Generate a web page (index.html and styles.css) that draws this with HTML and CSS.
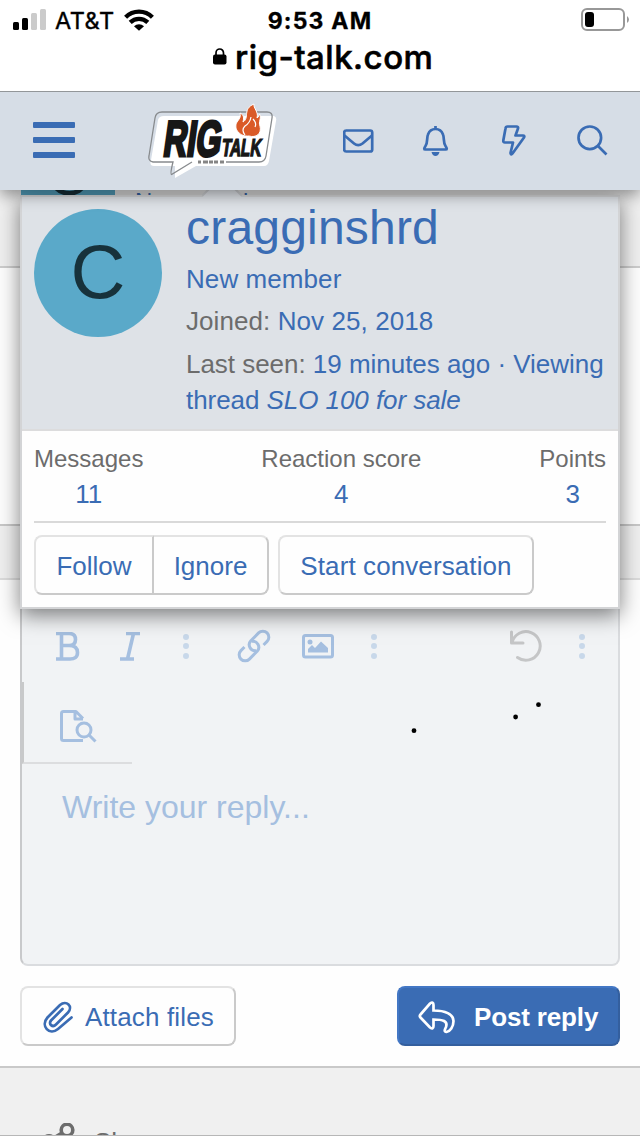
FILE: index.html
```html
<!DOCTYPE html>
<html lang="en">
<head>
<meta charset="utf-8">
<title>rig-talk.com</title>
<link rel="stylesheet" href="styles.css">
</head>
<body>
<div class="screen">
  <header class="chrome">
    <div class="status">
      <div class="carrier">
        <svg width="33" height="21" viewBox="0 0 33 21"><rect y="13" width="6" height="8" rx="1.5"/><rect x="9" y="9" width="6" height="12" rx="1.5"/><g fill="#cbcbcb"><rect x="18" y="4" width="6" height="17" rx="1.5"/><rect x="27" y="0" width="6" height="21" rx="1.5"/></g></svg>
        <span class="network">AT&amp;T</span>
        <svg class="wifi" width="30" height="22" viewBox="0 0 30 22"><g fill="none" stroke="#000" stroke-width="4.300"><path d="M1.600 8.200a19 19 0 0 1 26.800 0"/><path d="M6.200 13.400a12.500 12.500 0 0 1 17.600 0"/></g><path d="M15 21.800l-5-4.500a7.200 7.200 0 0 1 10 0z"/></svg>
      </div>
      <span class="clock">9:53 AM</span>
      <svg class="battery" width="49" height="24" viewBox="0 0 49 24"><rect x="2" y="1" width="42" height="21" rx="5" fill="none" stroke="#989898" stroke-width="2"/><rect x="5" y="4" width="9" height="15" rx="3"/><path d="M47 8q2 1.500 2 3.500t-2 3.500z" fill="#989898"/></svg>
    </div>
    <div class="address">
      <svg width="14" height="17" viewBox="0 0 14 17"><rect y="6.500" width="13.500" height="10" rx="2"/><path d="M3 8V5a3.750 4 0 0 1 7.500 0v3" fill="none" stroke="#000" stroke-width="1.700"/></svg>
      <span>rig-talk.com</span>
    </div>
  </header>

  <nav class="nav">
    <div class="burger"><i></i><i></i><i></i></div>
    <svg class="logo" width="132" height="80" viewBox="148 101 132 80">
      <path d="M164 116H274Q277 117 276 121L269 161Q268 166 264 166H196L175 178V166H154Q149 166 151 160L158 120Q159 116 164 116Z" fill="#fff"/>
      <path d="M162 112H267Q273 112 272 118L266 156Q265 162 259 162H226M192 162L171.500 174.500Q170 174 173 162H153Q148 161 149 156L155 118Q156 112 162 112" fill="none" stroke="#888b8e" stroke-width="1.300"/>
      <path d="M198 162h3m2 0h5m1 0h4m1 0h4m2 0h4" stroke="#858585" stroke-width="3"/>
      <text class="logo-rig" transform="translate(162 156) skewX(-8) scale(.65 1)">RIG</text>
      <text class="logo-talk" transform="translate(221 156) skewX(-8) scale(.62 1)">TALK</text>
      <path d="M254 104C253 108 259 112 257 118Q259 117 259.500 114C262 118 258 122 260 126C262 134 256 138 249 136C240 137 233 129 237 122C239 119 241 118 240 113C244 115 244 118 243 122C250 118 242 109 254 104Z" fill="#da5a27" stroke="#fff" stroke-width="1"/>
      <path d="M251 117Q250 123 245 126Q241 130 245 135M253 119Q257 123 255 127" fill="none" stroke="#fff" stroke-width="1.200"/>
    </svg>
    <div class="nav-icons">
      <svg width="31" height="24" viewBox="0 0 31 24"><rect x="1.200" y="1.500" width="28" height="21" rx="2"/><path d="M1.500 6.500L11 14.500q4.200 3.400 8.500 0L29 6.500"/></svg>
      <svg class="bell" width="27" height="31" viewBox="0 0 27 31"><path d="M3.500 21C6 17.500 4.500 13 6 9.500Q8 4 13.500 4T21 9.500C22.500 13 21 17.500 23.500 21Q26 24.500 23.500 24.500H3.500Q1 24.500 3.500 21ZM13.500 4V1"/><path d="M9.500 27h8q-1 4-4 4t-4-4Z" class="solid"/></svg>
      <svg width="24" height="31" viewBox="0 0 24 31"><path d="M5.500 1.500H14.500Q16.500 1.500 16 3.500L13.500 10.500H21Q23 10.500 22 12.500L10.500 28.500Q9 30.500 8.500 28L11 17.500H3Q1 17.500 1.300 15.500L3.500 3.500Q3.700 1.500 5.500 1.500Z"/></svg>
      <svg width="31" height="31" viewBox="0 0 31 31"><circle cx="12.800" cy="12.800" r="11.300"/><path d="M20.500 20.500L29.500 29.500"/></svg>
    </div>
  </nav>

  <main class="page">
    <section class="peek">
      <div class="peek-avatar">C</div>
      <div class="peek-title">New member</div>
    </section>
    <section class="post"></section>
    <section class="band"></section>
    <section class="reply">
      <div class="editor">
        <div class="toolbar">
          <svg class="t-b" width="24" height="29" viewBox="0 0 24 29"><path d="M0 1.500H13Q19.500 1.500 19.500 7.500T13 13.500H6M13 13.500Q21.500 13.500 21.500 20.500T13 27H0M5.500 1.500V27"/></svg>
          <svg class="t-i" width="21" height="29" viewBox="0 0 21 29"><path d="M6 1.500H20M0 27H14M13.500 1.500L7.500 27"/></svg>
          <span class="dots"><i></i><i></i><i></i></span>
          <svg class="t-link" width="34" height="34" viewBox="0 0 34 34"><g transform="rotate(-45 17 17)"><path d="M9.500 11H4.500A6 6 0 0 0 4.500 23H15.500A6 6 0 0 0 18.500 12"/><path d="M24.500 23H29.500A6 6 0 0 0 29.500 11H18.500A6 6 0 0 0 15.500 22" /></g></svg>
          <svg class="t-img" width="32" height="25" viewBox="0 0 32 25"><rect x="1.500" y="1.500" width="29" height="21.500" rx="2"/><circle cx="8" cy="8" r="2.500" class="fill"/><path d="M6 18.500V15l4-4 3 3 6-6.500 7 6.500v4.500Z" class="fill"/></svg>
          <span class="dots dots2"><i></i><i></i><i></i></span>
          <svg class="t-undo" width="32" height="33" viewBox="0 0 32 33"><path d="M1.500 2V13H13M2 12.500A14.300 14.300 0 1 1 7.500 27.500"/></svg>
          <span class="dots dots3"><i></i><i></i><i></i></span>
        </div>
        <div class="preview">
          <svg width="37" height="33" viewBox="0 0 37 33"><path d="M23 30.500H3.500Q1.500 30.500 1.500 28.500V3.500Q1.500 1.500 3.500 1.500H16L23 8.500M15 1.500V9H23"/><circle cx="24" cy="20" r="7"/><path d="M29 25L35.500 31.500"/></svg>
        </div>
        <div class="placeholder">Write your reply...</div>
        <svg class="specks" width="134" height="32" viewBox="0 0 134 32"><circle cx="4" cy="28.700" r="2.400"/><circle cx="105.600" cy="15" r="2.400"/><circle cx="128.500" cy="2.700" r="2.400"/></svg>
      </div>
      <div class="actions">
        <div class="btn attach"><svg width="30" height="33" viewBox="0 0 30 33"><path d="M19.500 8L8 19.500C5 23 9.500 27 13 23.500L25 11.500C30.500 5.500 23.500-1.500 17 4L4.500 16.500C-3 25 6.500 35 15 28L28.500 16.500"/></svg><span>Attach files</span></div>
        <div class="btn primary"><svg width="37" height="33" viewBox="0 0 37 33"><path d="M12 2.500Q15.500 0 15.500 4V9.500C27 9.500 35.500 13 35.500 20C35.500 26 32 30.500 28.500 31C25.500 31 27 28 28 26C30 20 25 18.500 15.500 18.500V25Q15.500 29 12 26.500L2.500 16.500Q1 15 2.500 13.500Z"/></svg><span>Post reply</span></div>
      </div>
    </section>
    <footer class="share">
      <svg width="32" height="34" viewBox="0 0 32 34"><circle cx="24" cy="7" r="5.800"/><circle cx="6" cy="18.500" r="5.800"/><circle cx="24" cy="29" r="5.800"/><path d="M10 15.500L19 10M12 21L19 25"/></svg>
      <span>Share:</span>
    </footer>
  </main>

  <aside class="card">
    <div class="card-head">
      <div class="avatar">C</div>
      <div class="info">
        <div class="name">cragginshrd</div>
        <div class="row">New member</div>
        <div class="row"><em>Joined:</em> Nov 25, 2018</div>
        <div class="row"><span class="seen"><em>Last seen:</em> 19 minutes ago · Viewing</span><br><span class="thread">thread <i>SLO 100 for sale</i></span></div>
      </div>
    </div>
    <div class="card-body">
      <div class="stats">
        <div><label>Messages</label><b>11</b></div>
        <div><label>Reaction score</label><b>4</b></div>
        <div><label>Points</label><b>3</b></div>
      </div>
      <div class="buttons">
        <div class="group"><div class="btn follow">Follow</div><div class="btn ignore">Ignore</div></div>
        <div class="btn start">Start conversation</div>
      </div>
    </div>
    <svg class="arrow" width="40" height="22" viewBox="0 0 40 22"><path d="M0 22L20 2L40 22Z" fill="#dee2e7"/><path d="M0 21L20 1L40 21" fill="none" stroke="#c9cbce" stroke-width="2"/></svg>
  </aside>
</div>
</body>
</html>
```
FILE: styles.css
```css
* { box-sizing: border-box; }
body { margin: 0; font-family: "Liberation Sans", Arial, sans-serif; color: #3a6cb4; }
svg { display: block; flex: none; }
.screen { position: relative; width: 640px; height: 1136px; overflow: hidden; display: flex; flex-direction: column; background: #fefefe; }

.chrome { position: relative; z-index: 6; height: 92px; flex: none; border-bottom: 1px solid #939699; background: #fff; color: #000; font-family: Inter, sans-serif; }
.status { display: grid; grid-template-columns: 1fr auto 1fr; height: 39px; padding: 0 11px 0 13px; }
.carrier { display: flex; padding-top: 9px; }
.network { font-size: 23.500px; line-height: 24px; font-weight: 400; margin-left: 9px; letter-spacing: .5px; -webkit-text-stroke: .4px #000; }
.wifi { margin-left: 9px; }
.clock { font-size: 23px; font-weight: 700; line-height: 24px; padding-top: 9px; margin-left: -2px; letter-spacing: 1.200px; -webkit-text-stroke: .3px #000; }
.battery { justify-self: end; margin-top: 8px; }
.address { display: flex; padding-left: 213px; gap: 8px; font-size: 33px; font-weight: 500; line-height: 38px; letter-spacing: .5px; -webkit-text-stroke: .6px #000; }
.address svg { margin-top: 9px; }
.address span { margin-top: -1px; }

.nav { position: relative; z-index: 5; height: 98px; flex: none; display: flex; background: #d6dde6; box-shadow: 0 5px 14px rgba(0,0,0,.4); }
.burger { width: 42px; margin: 30px 0 0 33px; display: flex; flex-direction: column; gap: 9px; }
.burger i { height: 6px; border-radius: 1px; background: #3a6cb4; }
.logo { margin: 9px 0 0 73px; }
.logo text { font-weight: 700; fill: #171717; stroke: #171717; }
.logo-rig { font-size: 50px; stroke-width: 3px; }
.logo-talk { font-size: 24.500px; stroke-width: 1.500px; }
.nav-icons { flex: 1; height: 97px; padding: 0 32px 0 63px; display: flex; justify-content: space-between; align-items: center; }
.nav-icons svg { fill: none; stroke: #3a6cb4; stroke-width: 2.700; stroke-linejoin: round; }
.nav-icons .bell { margin: 0 3px 0 -3px; }
.nav-icons .solid { fill: #3a6cb4; stroke: none; }

.page { flex: 1; display: flex; flex-direction: column; min-height: 0; }
.peek { height: 78px; flex: none; border-bottom: 2px solid #cdcdcd; background: #f0f0f0; display: flex; padding-left: 21px; overflow: hidden; }
.peek-avatar { width: 94px; height: 6px; background: #58a9c8; color: #17323b; display: flex; align-items: flex-end; justify-content: center; font-size: 60px; line-height: 42px; overflow: hidden; }
.peek-title { margin-left: 20px; font-size: 24px; line-height: 28px; margin-top: -2px; }
.post { height: 256px; flex: none; }
.band { height: 56px; flex: none; background: #f0f0f0; border-top: 2px solid #c8c8c8; border-bottom: 2px solid #dcdcdc; }
.reply { height: 488px; flex: none; padding: 0 20px; border-bottom: 2px solid #c9c9c9; }
.editor { position: relative; height: 386px; border: 2px solid #dadcdf; border-left-color: #c8c9cb; border-radius: 8px; background: #f1f3f5; }
.toolbar { height: 100px; padding: 28px 0 0 34px; display: flex; align-items: center; }
.toolbar svg, .preview svg { fill: none; stroke: #a5bfe0; stroke-width: 3; stroke-linejoin: round; }
.toolbar .t-b, .toolbar .t-i { stroke-width: 3.600; }
.toolbar .fill { fill: #a5bfe0; stroke: none; }
.t-i { margin-left: 40px; }
.dots { width: 6px; display: flex; flex-direction: column; gap: 3.500px; margin-left: 42px; }
.dots i { width: 6px; height: 6px; border-radius: 50%; background: #c8d8ea; }
.t-link { margin-left: 48px; }
.t-img { margin-left: 31px; }
.dots2 { margin-left: 37px; }
.toolbar .t-undo { margin-left: 133px; stroke: #c5c6c7; stroke-linecap: round; }
.dots3 { margin-left: 37px; }
.preview { width: 110px; height: 82px; border-left: 2px solid #c8c9ca; border-bottom: 2px solid #dcdddf; padding: 28px 0 0 36px; }
.placeholder { font-size: 32px; line-height: 36px; padding: 25px 0 0 40px; color: #a5bfe0; white-space: nowrap; }
.specks { position: absolute; left: 388px; top: 120px; }
.actions { display: flex; justify-content: space-between; padding-top: 20px; }
.btn { height: 60px; padding-top: 2px; display: flex; align-items: center; border: 2px solid #e3e3e3; border-right-color: #cacaca; border-bottom-color: #cacaca; border-radius: 8px; background: #fefefe; font-size: 26px; white-space: nowrap; }
.attach { width: 216px; padding-left: 21px; gap: 12px; letter-spacing: .15px; }
.attach svg { fill: none; stroke: #3a6cb4; stroke-width: 2.700; stroke-linecap: round; }
.primary { width: 223px; padding-left: 19px; gap: 19px; color: #fff; font-weight: 700; letter-spacing: -.15px; background: #3a6cb4; border-color: #4377c5 #345f9e #345f9e #4377c5; }
.primary svg { fill: none; stroke: #fff; stroke-width: 2.700; }
.share { flex: 1; background: #f0f0f0; border-bottom: 1px solid #b7b7b7; padding: 55px 0 0 43px; display: flex; gap: 19px; color: #6c6c6c; font-size: 26px; line-height: 36px; overflow: hidden; }
.share svg { fill: none; stroke: #6c6c6c; stroke-width: 3.600; }
.share span { margin-top: 1px; }

.card { position: absolute; z-index: 3; left: 20px; top: 195px; width: 600px; height: 414px; border: 2px solid #d3d4d6; background: #fefefe; box-shadow: 0 6px 20px rgba(0,0,0,.5); }
.card-head { height: 234px; padding: 12px 0 0 12px; display: flex; gap: 24px; background: #dee2e7; border-bottom: 2px solid #dcdcdd; }
.avatar { width: 128px; height: 128px; border-radius: 50%; background: #5aa9c9; color: #17323b; font-size: 76px; line-height: 126px; text-align: center; }
.info { margin-top: -7px; white-space: nowrap; font-size: 26px; line-height: 36px; }
.name { font-size: 48px; line-height: 52px; margin-bottom: 7px; letter-spacing: .2px; }
.row { margin-bottom: 6px; letter-spacing: .08px; }
.row:nth-child(3) { margin-bottom: 7px; }
.seen, .thread { letter-spacing: -.03px; }
.thread { letter-spacing: -.06px; }
.row em { color: #6c6c6c; font-style: normal; }
.card-body { padding: 11px 12px 0; }
.stats { display: flex; justify-content: space-between; height: 81px; border-bottom: 2px solid #d9d9d9; }
.stats div { display: flex; flex-direction: column; align-items: center; }
.stats label { font-size: 24px; line-height: 34px; color: #6c6c6c; }
.stats b { font-size: 26px; line-height: 37px; font-weight: 400; }
.buttons { display: flex; gap: 9px; padding-top: 12px; }
.group { display: flex; }
.follow, .ignore, .start { justify-content: center; }
.follow { width: 120px; border-radius: 8px 0 0 8px; }
.ignore { width: 115px; border-left: 0; border-radius: 0 8px 8px 0; }
.start { width: 256px; letter-spacing: .1px; }
.arrow { position: absolute; left: 180px; top: -22px; }
```
